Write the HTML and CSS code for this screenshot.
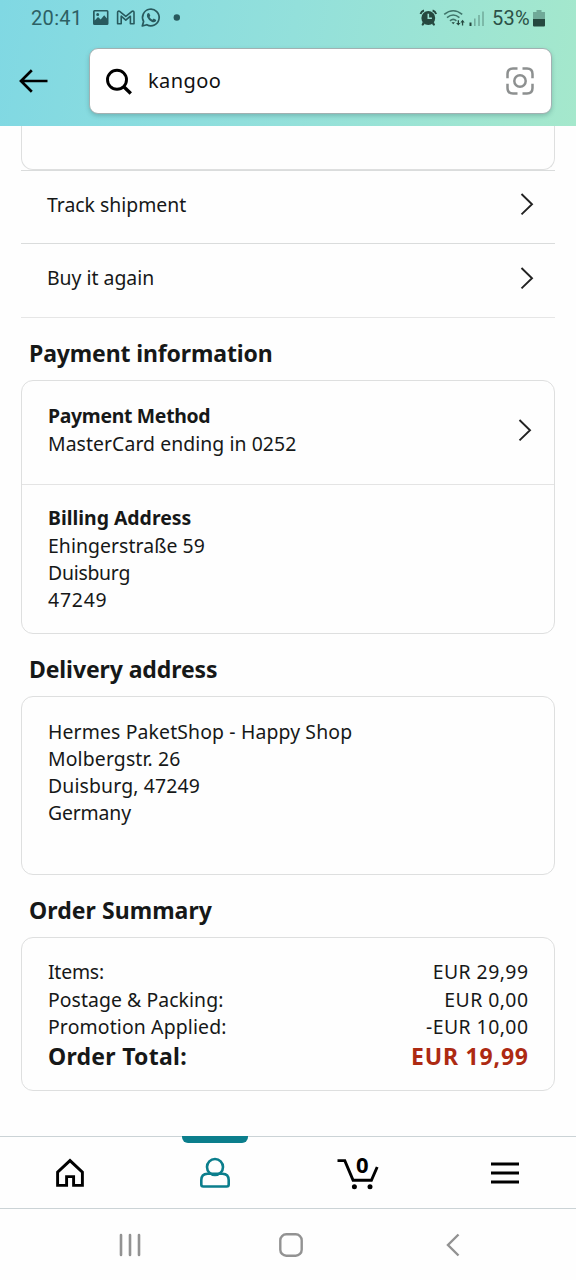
FILE: index.html
```html
<!DOCTYPE html>
<html lang="en">
<head>
<meta charset="utf-8">
<title>Order details</title>
<link rel="stylesheet" href="styles.css">
</head>
<body>
<div class="screen">
  <header class="header">
    <div class="status">
      <span class="clock">20:41</span>
      <svg class="status-left" width="92" height="24" viewBox="0 0 92 24">
        <path fill="#285a5e" fill-rule="evenodd" d="M2.500 4h12.500a1.500 1.500 0 0 1 1.500 1.500v12a1.500 1.500 0 0 1-1.500 1.500H2.500a1.500 1.500 0 0 1-1.500-1.500v-12A1.500 1.500 0 0 1 2.500 4zM2.700 5.600v9l3.300-3.500 2.700 2.400 3.500-4.200 2.700 3.200V5.600zM5.700 6.900a1.500 1.500 0 1 1 0 3 1.500 1.500 0 0 1 0-3z"/>
        <path fill="none" stroke="#285a5e" stroke-width="1.600" stroke-linejoin="round" d="M25.600 17.700V6.500q0-1.700 1.700-1.300l6.500 5.200 6.500-5.200q1.700-.4 1.700 1.300v11.200h-3.600v-7.500l-4.600 3.900-4.600-3.900v7.500z"/>
        <path fill="none" stroke="#285a5e" stroke-width="1.700" stroke-linejoin="round" d="M50.300 20l1.300-4.500a8.300 8.300 0 1 1 3.200 3.200z"/>
        <path fill="#285a5e" d="M55.500 7.600q1.200-1.200 2 .2l.8 1.900-.8 1.300q1.100 2 3 2.700l1.200-1.100 2.200 1.100q.8.700-.3 1.900-1.700 1.300-4 .1-3-1.500-4.500-4.800-.6-1.900.4-3.300z"/>
        <circle cx="84.800" cy="11.500" r="3.200" fill="#285a5e"/>
      </svg>
      <svg class="status-right" width="68" height="26" viewBox="0 0 68 26">
        <g fill="#26483f"><circle cx="9.300" cy="12" r="6.900"/><path d="M3.800 15.800l2 2-1.800 2-1.500-.9zM14.800 15.800l-2 2 1.800 2 1.500-.9z"/></g>
        <path d="M1.500 8Q2.300 5.200 5 4.500M17.100 8Q16.300 5.200 13.600 4.500" fill="none" stroke="#26483f" stroke-width="1.900"/>
        <path d="M9.300 7.800v4.500h3.600" fill="none" stroke="#9be0d2" stroke-width="1.600"/>
        <g fill="none" stroke="#3f756a" stroke-width="1.600"><path d="M25.200 8.300q9-7.200 18 0M28 11.600q6.200-5.200 12.400 0M31 14.800q3.200-2.800 6.400 0"/></g>
        <path d="M32.500 16.200h3.400L34.200 18.200zM38.700 14.200h1.300v2.800h1.500l-2.200 2.600-2.200-2.600h1.600zM42.900 19.400h1.300v-2.900h1.500L43.600 13.800 41.400 16.500h1.500z" fill="#26483f"/>
        <path d="M51.500 16.500V20" stroke="#26483f" stroke-width="2"/>
        <path d="M55.800 12.500V20M60 9V20M64 5.500V20" stroke="#71aa9b" stroke-width="1.500"/>
      </svg>
      <span class="percent">53%</span>
      <svg class="battery" width="12" height="17" viewBox="0 0 12 17">
        <path d="M3.500 0h5v2H12v8H0V2h3.500z" fill="#70a998"/><path d="M0 9h12v6.500q0 1-1 1H1q-1 0-1-1z" fill="#26483f"/>
      </svg>
    </div>
    <div class="search-row">
      <svg class="back" width="30" height="26" viewBox="0 0 30 26"><path d="M28.500 13H2.500M12.800 2.300L2 13 12.800 23.700" fill="none" stroke="#000" stroke-width="2.700"/></svg>
      <div class="search">
        <svg class="glass" width="28" height="28" viewBox="0 0 28 28"><circle cx="12" cy="11.800" r="9.500" fill="none" stroke="#000" stroke-width="2.900"/><path d="M18.500 18.500l7.300 7" stroke="#000" stroke-width="3.400"/></svg>
        <span class="query">kangoo</span>
        <svg class="lens" width="28" height="28" viewBox="0 0 28 28"><g fill="none" stroke="#8d9090" stroke-width="2.500"><circle cx="14" cy="14" r="5.700"/><path d="M1.500 11.300V7q0-5.500 5.500-5.500h4.500M16.500 1.500H21q5.500 0 5.500 5.500v4.300M26.500 16.800V21q0 5.500-5.500 5.500h-4.500M11.500 26.500H7q-5.500 0-5.500-5.500v-4.200"/></g></svg>
      </div>
    </div>
  </header>

  <main class="content">
    <div class="card card-tail"></div>
    <div class="row"><span>Track shipment</span><svg class="chevron" width="14" height="24" viewBox="0 0 14 24"><path d="M1.500 2l10.500 10.200L1.500 22.400" fill="none" stroke="#222" stroke-width="1.900"/></svg></div>
    <div class="row row-last"><span>Buy it again</span><svg class="chevron" width="14" height="24" viewBox="0 0 14 24"><path d="M1.500 2l10.500 10.200L1.500 22.400" fill="none" stroke="#222" stroke-width="1.900"/></svg></div>

    <h2 class="title title-payment">Payment information</h2>
    <section class="card payment">
      <div class="method">
        <div><div class="label t-method">Payment Method</div><div class="t-card">MasterCard ending in 0252</div></div>
        <svg class="chevron" width="14" height="24" viewBox="0 0 14 24"><path d="M1.500 2l10.500 10.200L1.500 22.400" fill="none" stroke="#222" stroke-width="1.900"/></svg>
      </div>
      <div class="billing">
        <div class="label">Billing Address</div>
        <div class="t-card">Ehingerstraße 59</div>
        <div class="t-city">Duisburg</div>
        <div class="t-zip">47249</div>
      </div>
    </section>

    <h2 class="title title-delivery">Delivery address</h2>
    <section class="card delivery">
      <div>Hermes PaketShop - Happy Shop</div>
      <div>Molbergstr. 26</div>
      <div>Duisburg, 47249</div>
      <div class="t-country">Germany</div>
    </section>

    <h2 class="title title-summary">Order Summary</h2>
    <section class="card summary">
      <div class="line"><span class="t-items">Items:</span><span class="eur">EUR 29,99</span></div>
      <div class="line"><span class="t-card">Postage &amp; Packing:</span><span class="eur">EUR 0,00</span></div>
      <div class="line"><span class="t-promo">Promotion Applied:</span><span class="eur">-EUR 10,00</span></div>
      <div class="line total"><span class="t-total">Order Total:</span><span class="price">EUR 19,99</span></div>
    </section>
  </main>

  <nav class="tabs">
    <div class="tab"><svg width="30" height="30" viewBox="0 0 30 30"><path d="M2.600 27.400V14.200L15 2.600l12.400 11.600v13.200h-8.800v-8.800h-7v8.800z" fill="none" stroke="#000" stroke-width="2.900"/></svg></div>
    <div class="tab active"><svg width="32" height="32" viewBox="0 0 32 32"><g fill="none" stroke="#0b7e8c" stroke-width="2.600"><circle cx="16" cy="10" r="8"/><path d="M10.500 16.700H8.500Q2.300 17 2.300 23v4.500q0 2 2 2h23.400q2 0 2-2V23q0-6-6.200-6.300h-2z"/></g></svg></div>
    <div class="tab cart"><svg width="44" height="36" viewBox="0 0 44 36"><path d="M.5 5.600h7.300l8.300 19.700h18.300L40.200 12" fill="none" stroke="#000" stroke-width="2.900"/><circle cx="17.400" cy="31.800" r="2.500"/><circle cx="33" cy="31.800" r="2.500"/></svg><span class="count">0</span></div>
    <div class="tab"><svg width="28" height="24" viewBox="0 0 28 24"><path d="M0 3h28M0 12h28M0 21h28" stroke="#000" stroke-width="2.900"/></svg></div>
  </nav>

  <footer class="system">
    <svg width="22" height="24" viewBox="0 0 22 24"><path d="M2 2v20M11 2v20M20 2v20" stroke="#929292" stroke-width="2.600" stroke-linecap="round"/></svg>
    <svg width="24" height="24" viewBox="0 0 24 24"><rect x="1.300" y="1.300" width="21.400" height="21.400" rx="6" fill="none" stroke="#929292" stroke-width="2.400"/></svg>
    <svg width="14" height="24" viewBox="0 0 14 24"><path d="M12.500 1.500L2 12l10.500 10.500" fill="none" stroke="#929292" stroke-width="2.400"/></svg>
  </footer>
</div>
</body>
</html>
```
FILE: styles.css
```css
* { box-sizing: border-box; }
body { margin: 0; background: #fefefe; }
.screen {
  width: 576px;
  height: 1280px;
  display: flex;
  flex-direction: column;
  overflow: hidden;
  background: #fefefe;
  color: #161818;
  font: 19.400px/27.300px "Noto Sans", sans-serif;
  white-space: nowrap;
}
svg { display: block; flex: none; }

.header {
  flex: none;
  height: 126px;
  background: linear-gradient(100deg, #80d8e3 0%, #93e0db 50%, #a5e8cc 100%);
}
.status {
  height: 37px;
  display: flex;
  align-items: center;
  padding: 0 30px 0 31px;
  font: 20px/37px Roboto, sans-serif;
}
.clock { width: 61px; color: #2d6064; letter-spacing: .35px; }
.status-left { margin-top: -1px; }
.status-right { margin-left: 235px; }
.percent { margin-left: 5px; width: 41px; color: #2c5147; letter-spacing: .2px; }
.battery { margin-top: -1px; }
.search-row { display: flex; align-items: center; padding: 11px 24px 0 19px; }
.search {
  width: 463px;
  height: 66px;
  margin-left: 40px;
  padding: 0 17px 0 15px;
  display: flex;
  align-items: center;
  border: 1.500px solid #a2b1b2;
  border-radius: 9px;
  background: #fff;
  box-shadow: 0 2px 4px rgba(50, 100, 100, .3);
}
.glass { margin-top: 2px; }
.query { margin-left: 15px; color: #111; font-size: 20px; letter-spacing: .4px; }
.lens { margin-left: auto; }

.content { flex: none; height: 1010px; padding: 0 21px; }
.card { border: 1px solid #dedfdf; border-radius: 12px; }
.card-tail { height: 43.500px; border-top: 0; border-radius: 0 0 12px 12px; }
.row {
  height: 73.500px;
  display: flex;
  align-items: center;
  justify-content: space-between;
  border-top: 1px solid #dadcdc;
  padding: 0 21px 5px 26px;
}
.row-last { height: 75px; border-bottom: 1px solid #e6e6e6; padding-bottom: 5px; }
.title {
  margin: 0;
  height: 62px;
  padding: 19px 0 0 8px;
  font-size: 23px;
  line-height: 32px;
  font-weight: 700;
}
.title-payment { letter-spacing: -.13px; }
.title-delivery { letter-spacing: -.1px; }
.title-summary { letter-spacing: .06px; }
.label { font-weight: 700; }
.t-method { letter-spacing: -.3px; }
.t-card { letter-spacing: .07px; }
.t-city { letter-spacing: -.25px; }
.t-zip { letter-spacing: .8px; }
.t-country { letter-spacing: -.15px; }
.t-items { letter-spacing: -.2px; }
.t-promo { letter-spacing: .14px; }
.t-total { letter-spacing: .27px; }
.payment { height: 254px; }
.method {
  height: 104px;
  display: flex;
  justify-content: space-between;
  align-items: center;
  padding: 0 22px 6px 26px;
  border-bottom: 1px solid #e4e4e4;
}
.billing { padding: 19.300px 26px; }
.delivery { height: 179px; padding: 20.600px 26px; letter-spacing: .14px; }
.summary { height: 154px; padding: 20px 26px; }
.line { display: flex; justify-content: space-between; line-height: 27.500px; }
.eur { letter-spacing: .45px; margin-right: -.450px; }
.total { font-size: 23px; font-weight: 700; line-height: 31px; }
.price { color: #ad2a12; letter-spacing: .8px; margin-right: -.8px; }

.tabs {
  flex: none;
  height: 73px;
  display: grid;
  grid-template-columns: 140px 150px 138px 154px;
  border-top: 1.500px solid #cbd3d6;
  border-bottom: 1.500px solid #cbd3d6;
}
.tab { display: flex; align-items: center; justify-content: center; position: relative; }
.active::before {
  content: "";
  position: absolute;
  top: -1px;
  left: 41.500px;
  width: 66px;
  height: 7px;
  border-radius: 0 0 6px 6px;
  background: #0b7e8c;
}
.count { position: absolute; top: 13px; left: 66px; font-size: 22px; font-weight: 700; line-height: 28px; color: #000; }
.system { flex: 1; display: flex; align-items: center; padding: 0 0 0 119px; }
.system svg:nth-child(2) { margin-left: 137.500px; }
.system svg:nth-child(3) { margin-left: 143px; }
```
